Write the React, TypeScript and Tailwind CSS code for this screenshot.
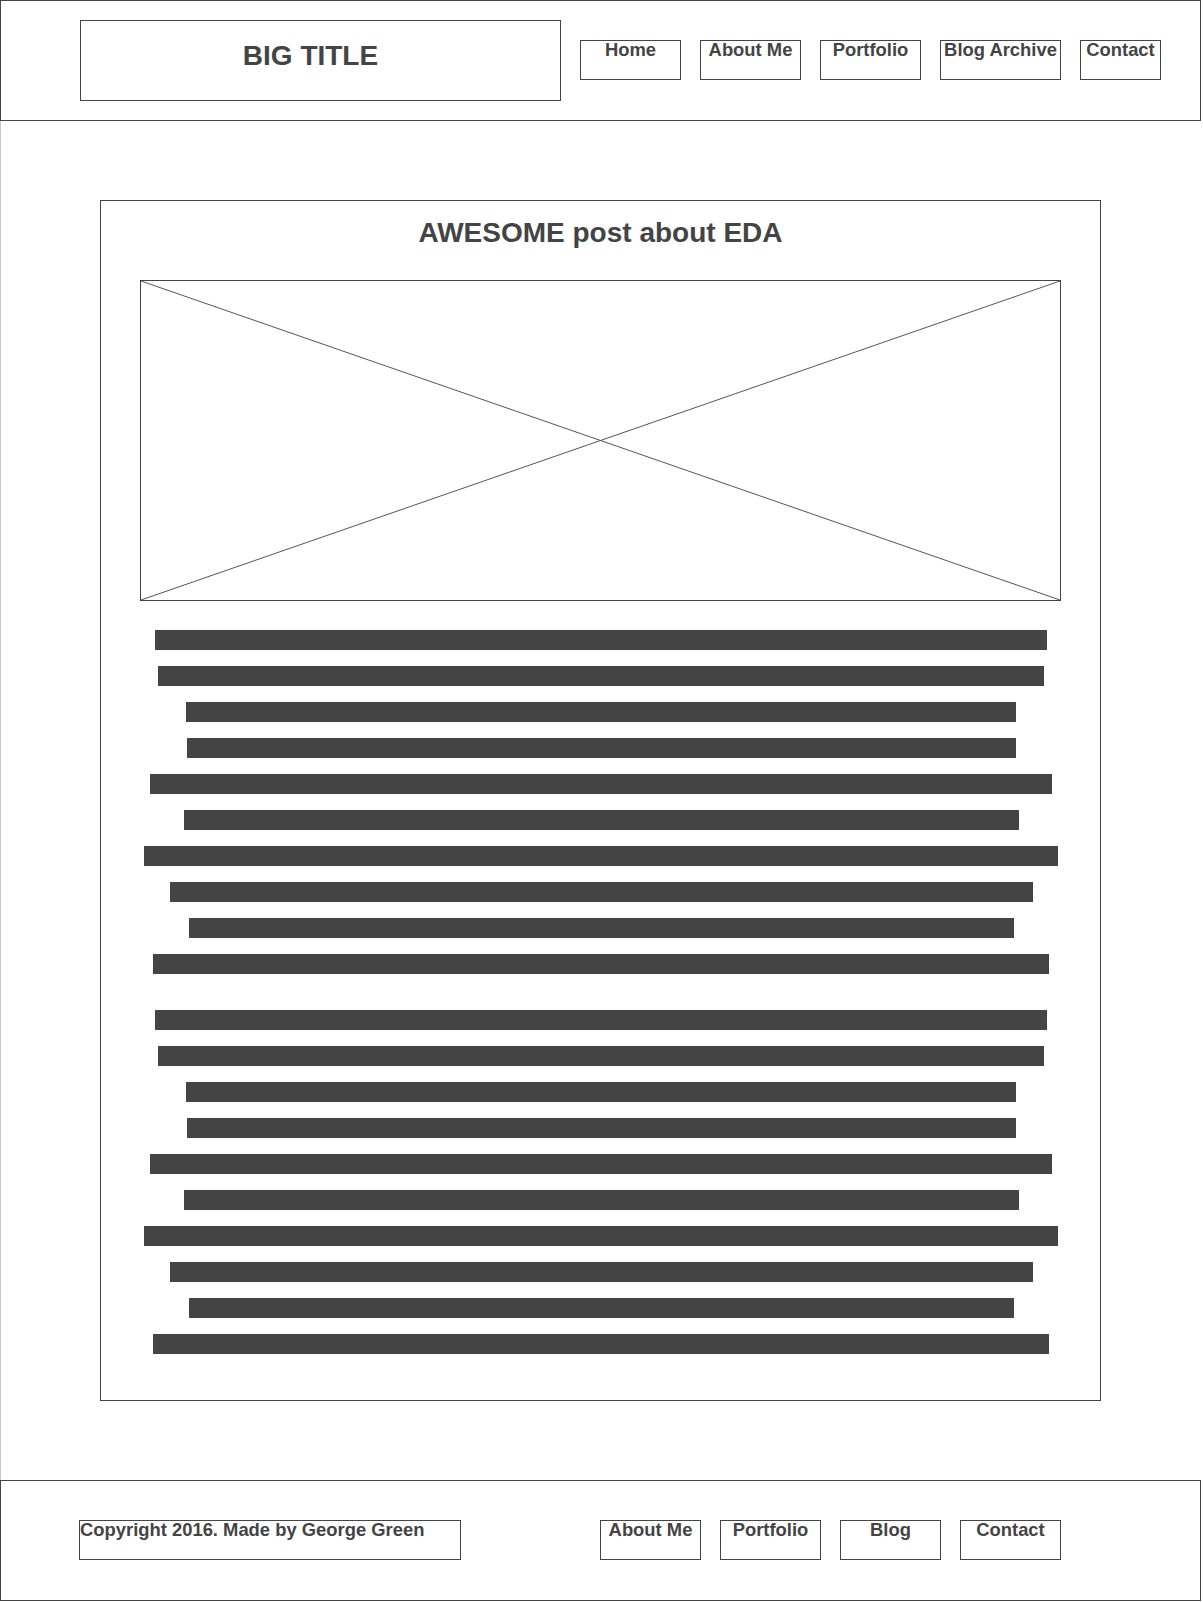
import React from 'react';

const headerLinks = [
  { label: 'Home', w: 'w-[101px]' },
  { label: 'About Me', w: 'w-[101px]' },
  { label: 'Portfolio', w: 'w-[101px]' },
  { label: 'Blog Archive', w: 'w-[121px]' },
  { label: 'Contact', w: 'w-[81px]' },
];

const footerLinks = ['About Me', 'Portfolio', 'Blog', 'Contact'];

// placeholder text lines, widths read off the mockup
const lineWidths = [
  'w-[892px]',
  'w-[886px]',
  'w-[830px]',
  'w-[829px]',
  'w-[902px]',
  'w-[835px]',
  'w-[914px]',
  'w-[863px]',
  'w-[825px]',
  'w-[896px]',
];

function NavBox({ label, w }: { label: string; w: string }) {
  return (
    <div className={`${w} h-[40px] shrink-0 border border-[#444] text-center text-[18.4px] font-bold leading-[18px] text-[#444] whitespace-nowrap`}>
      {label}
    </div>
  );
}

function TextBlock() {
  return (
    <div className="flex flex-col items-center gap-4 pl-[1px]">
      {lineWidths.map((w, i) => (
        <div key={i} className={`${w} h-5 bg-[#444]`} />
      ))}
    </div>
  );
}

export default function App() {
  return (
    <div
      className="w-[1203px] bg-white text-[#444]"
      style={{ fontFamily: '"Liberation Sans", Arial, sans-serif' }}
    >
      {/* Header */}
      <header className="flex h-[121px] w-[1201px] items-start gap-[19px] border border-[#444] pl-[79px]">
        <div className="mt-[19px] h-[81px] w-[481px] shrink-0 border border-[#444] pt-[19px] pr-[20px] text-center text-[28px] font-bold leading-[32px]">
          BIG TITLE
        </div>
        <nav className="mt-[39px] flex gap-[19px]">
          {headerLinks.map((l) => (
            <NavBox key={l.label} label={l.label} w={l.w} />
          ))}
        </nav>
      </header>

      {/* Main */}
      <main className="h-[1359px] border-l border-[#c8c8c8] pt-[79px] pl-[99px]">
        <article className="h-[1201px] w-[1001px] border border-[#444] pt-[16px]">
          <h1 className="text-center text-[28px] font-bold leading-[32px]">AWESOME post about EDA</h1>

          <div className="relative mt-[31px] ml-[39px] h-[321px] w-[921px] border border-[#444]">
            <svg className="absolute inset-0 h-full w-full" viewBox="0 0 100 100" preserveAspectRatio="none">
              <line x1="0" y1="0" x2="100" y2="100" stroke="#555" strokeWidth="1" vectorEffect="non-scaling-stroke" />
              <line x1="0" y1="100" x2="100" y2="0" stroke="#555" strokeWidth="1" vectorEffect="non-scaling-stroke" />
            </svg>
          </div>

          <div className="mt-[29px] flex flex-col gap-9">
            <TextBlock />
            <TextBlock />
          </div>
        </article>
      </main>

      {/* Footer */}
      <footer className="flex h-[121px] w-[1201px] items-start border border-[#444] pt-[39px] pl-[78px]">
        <div className="h-[40px] w-[382px] shrink-0 border border-[#444] text-[18.4px] font-bold leading-[18px] whitespace-nowrap">
          Copyright 2016. Made by George Green
        </div>
        <nav className="ml-[139px] flex gap-[19px]">
          {footerLinks.map((l) => (
            <NavBox key={l} label={l} w="w-[101px]" />
          ))}
        </nav>
      </footer>
    </div>
  );
}
